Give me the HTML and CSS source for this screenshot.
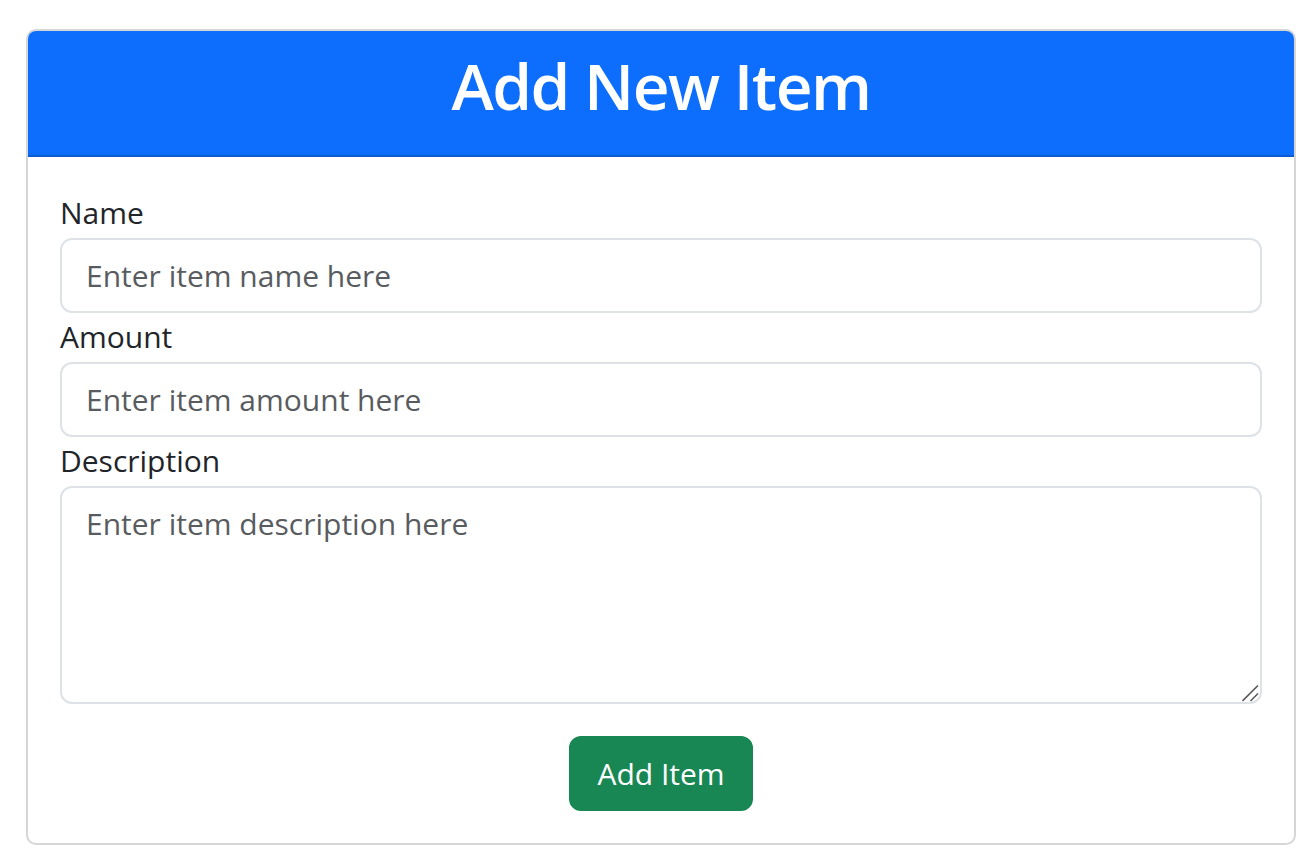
FILE: index.html
```html
<!DOCTYPE html>
<html lang="en">
<head>
<meta charset="utf-8">
<title>Add New Item</title>
<link rel="stylesheet" href="styles.css">
</head>
<body>
<div class="page">
  <div class="card">
    <div class="card-header">
      <h1 class="card-title">Add New Item</h1>
    </div>
    <form class="card-body">
      <div class="field">
        <label class="form-label" for="name">Name</label>
        <input class="form-control" id="name" type="text" placeholder="Enter item name here">
      </div>
      <div class="field">
        <label class="form-label" for="amount">Amount</label>
        <input class="form-control" id="amount" type="text" placeholder="Enter item amount here">
      </div>
      <div class="field">
        <label class="form-label" for="description">Description</label>
        <div class="textarea-wrap">
          <textarea class="form-control form-textarea" id="description" placeholder="Enter item description here"></textarea>
          <svg class="grip" width="17" height="17" viewBox="0 0 17 17" aria-hidden="true">
            <line x1="0.5" y1="16" x2="16" y2="0.5" />
            <line x1="8.5" y1="16" x2="16" y2="8.5" />
          </svg>
        </div>
      </div>
      <div class="actions">
        <button class="btn-success" type="button">Add Item</button>
      </div>
    </form>
  </div>
</div>
</body>
</html>
```
FILE: styles.css
```css
html, body {
  margin: 0;
  padding: 0;
  background: #ffffff;
}

body {
  font-family: "Open Sans", "Noto Sans", sans-serif;
  color: #212529;
}

.page {
  padding: 29px 20px 0 26px;
}

.card {
  border: 2px solid #d6d6d6;
  border-radius: 10px;
  overflow: hidden;
  background: #fff;
}

.card-header {
  background: #0d6efd;
  border-bottom: 2px solid #0b5bd1;
  padding: 15px 16px 29px;
  text-align: center;
}

.card-title {
  margin: 0;
  font-size: 64px;
  line-height: 80px;
  font-weight: 600;
  letter-spacing: -1.5px;
  color: #ffffff;
}

.card-body {
  display: flex;
  flex-direction: column;
  padding: 33px 32px 32px;
  margin: 0;
}

.field {
  display: flex;
  flex-direction: column;
}

.form-label {
  font-size: 30px;
  line-height: 45px;
  margin-bottom: 3px;
  margin-top: 1px;
  color: #212529;
}

.field:first-child .form-label {
  margin-top: 0;
}

.form-control {
  box-sizing: border-box;
  width: 100%;
  height: 75px;
  margin: 0;
  padding: 0 24px;
  font-family: "Open Sans", "Noto Sans", sans-serif;
  font-size: 30px;
  line-height: 45px;
  color: #212529;
  background: #fff;
  border: 2px solid #dee2e6;
  border-radius: 12px;
  outline: none;
}

.form-control::placeholder {
  color: #595c5f;
  opacity: 1;
}

.textarea-wrap {
  position: relative;
}

.form-textarea {
  display: block;
  height: 218px;
  padding: 13px 24px;
  resize: none;
}

.grip {
  position: absolute;
  right: 3px;
  bottom: 2px;
  pointer-events: none;
}

.grip line {
  stroke: #5a5a5a;
  stroke-width: 1.6;
}

.actions {
  display: flex;
  justify-content: center;
  margin-top: 32px;
}

.btn-success {
  box-sizing: border-box;
  height: 75px;
  padding: 0 26px;
  font-family: "Open Sans", "Noto Sans", sans-serif;
  font-size: 30px;
  line-height: 45px;
  color: #ffffff;
  background: #198754;
  border: 2px solid #198754;
  border-radius: 12px;
  cursor: pointer;
}
```
